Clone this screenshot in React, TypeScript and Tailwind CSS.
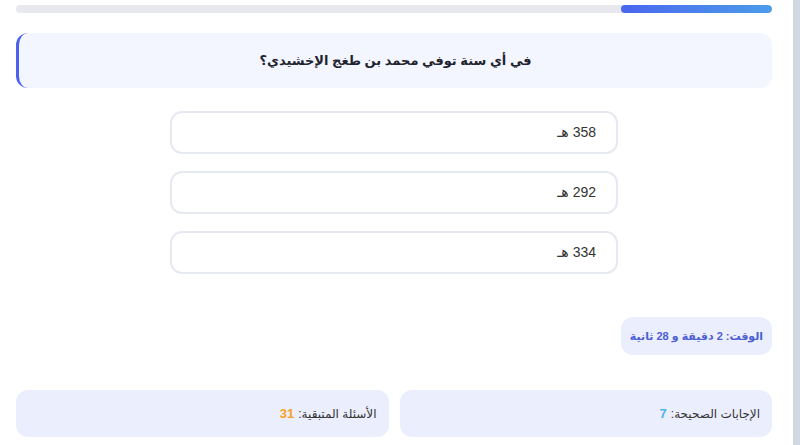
import React from 'react';

const options = ['358 هـ', '292 هـ', '334 هـ'];

const App: React.FC = () => {
  const progress = 20;

  return (
    <div dir="rtl" className="h-[445px] w-[800px] overflow-hidden border-r-[7px] border-[#d1d7e3] bg-white" style={{ fontFamily: '"Liberation Sans", "DejaVu Sans", sans-serif' }}>
      <div className="pl-4 pr-[21px] pt-[5px]">
        {/* progress */}
        <div className="h-[8px] w-full overflow-hidden rounded-full bg-[#e7e9ee]">
          <div className="h-full rounded-full bg-gradient-to-l from-[#4c9cea] to-[#4a66ee]" style={{ width: `${progress}%` }} />
        </div>

        {/* question */}
        <div className="mt-[20px] flex h-[55px] items-center justify-center rounded-xl border-l-[3px] border-[#4a63ef] bg-[#f3f6fe]">
          <h2 className="text-[13px] font-bold text-[#1f2430]">في أي سنة توفي محمد بن طغج الإخشيدي؟</h2>
        </div>

        {/* options */}
        <div className="mx-auto mt-[23px] flex w-[448px] flex-col gap-[17px]">
          {options.map((o) => (
            <button
              key={o}
              className="flex h-[43px] items-center rounded-xl border-2 border-[#e6e9ef] bg-white pr-[20px] text-right text-[14px] text-[#333]"
            >
              {o}
            </button>
          ))}
        </div>

        {/* timer */}
        <div className="mt-[43px] flex">
          <div className="flex h-[38px] w-[151px] items-center justify-center rounded-xl bg-[#ebeefd] text-[11px] font-bold text-[#4c5fd3]">
            الوقت: 2 دقيقة و 28 ثانية
          </div>
        </div>

        {/* stats */}
        <div className="mt-[35px] grid grid-cols-2 gap-[11px]">
          <div className="flex h-[47px] items-center rounded-xl bg-[#ebeefd] pr-[12px] text-[12px] text-[#333]">
            <span>الإجابات الصحيحة:</span>
            <span className="mr-[4px] text-[13px] font-bold text-[#4fb3ea]">7</span>
          </div>
          <div className="flex h-[47px] items-center rounded-xl bg-[#ebeefd] pr-[12px] text-[12px] text-[#333]">
            <span>الأسئلة المتبقية:</span>
            <span className="mr-[4px] text-[13px] font-bold text-[#f5a023]">31</span>
          </div>
        </div>
      </div>
    </div>
  );
};

export default App;
